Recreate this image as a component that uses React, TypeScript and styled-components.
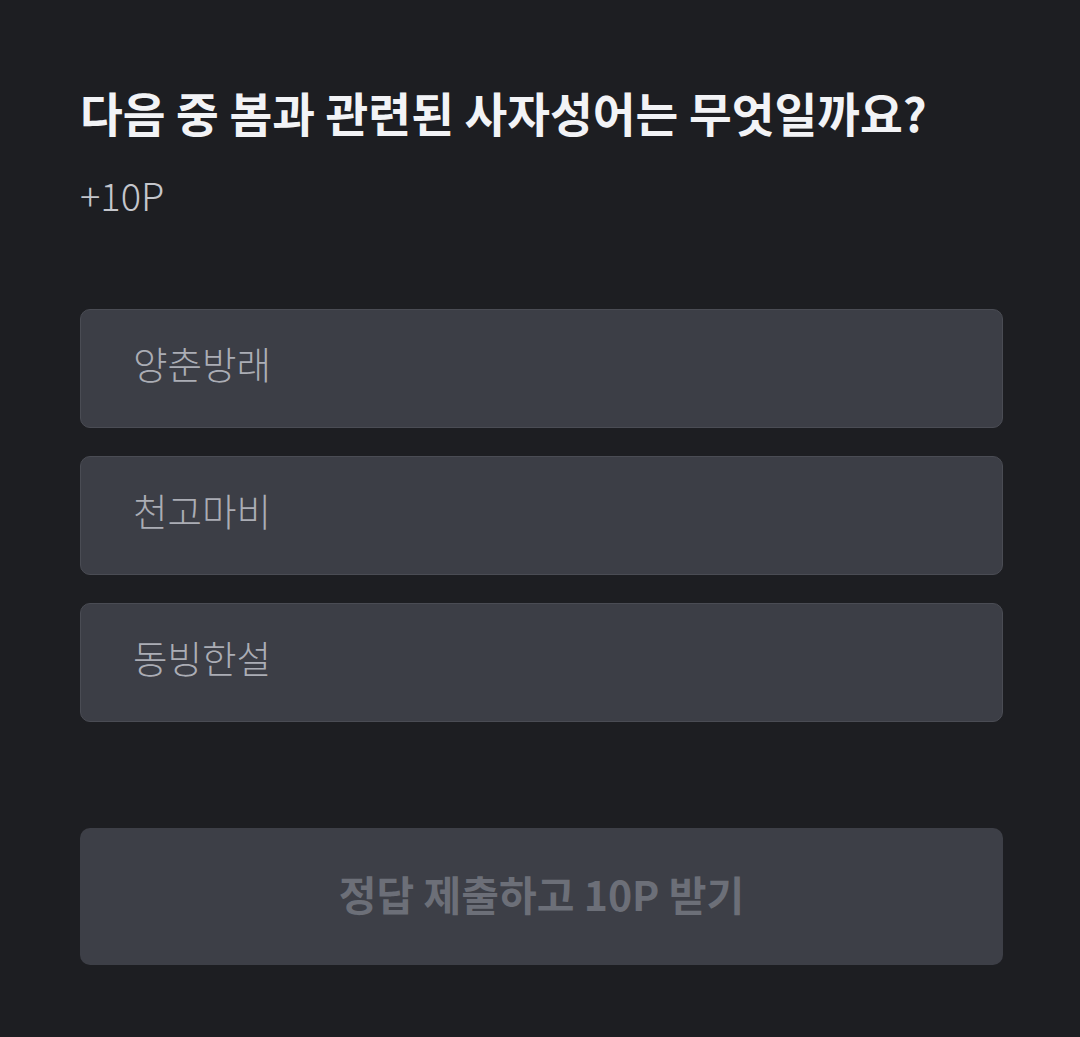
import React from "react";
import styled, { createGlobalStyle } from "styled-components";

const Global = createGlobalStyle`
  html, body { margin: 0; padding: 0; background: #1d1e22; }
  body { font-family: "Noto Sans CJK KR", "Noto Sans", sans-serif; }
  * { box-sizing: border-box; }
`;

const Page = styled.main`
  min-height: 1037px;
  background: #1d1e22;
  padding: 80px 77px 0 80px;
  display: flex;
  flex-direction: column;
`;

const Title = styled.h1`
  margin: 0;
  font-size: 46.5px;
  font-weight: 700;
  line-height: 64px;
  color: #f2f3f6;
  letter-spacing: 0;
`;

const Reward = styled.p`
  margin: 26px 0 0 0;
  font-size: 38px;
  font-weight: 300;
  line-height: 50px;
  color: #c4c6cc;
`;

const Options = styled.div`
  margin-top: 89px;
  display: flex;
  flex-direction: column;
  gap: 28px;
`;

const Option = styled.button`
  height: 119px;
  width: 100%;
  background: #3c3e46;
  border: 1px solid #4a4c54;
  border-radius: 10px;
  padding: 0 0 12px 52px;
  text-align: left;
  font-family: inherit;
  font-size: 37.5px;
  font-weight: 300;
  color: #abadb5;
  cursor: pointer;
`;

const Submit = styled.button<{ $enabled?: boolean }>`
  margin-top: 106px;
  height: 137px;
  width: 100%;
  background: #3d3f47;
  border: none;
  border-radius: 10px;
  padding: 0 0 8px 0;
  font-family: inherit;
  font-size: 41px;
  font-weight: 700;
  color: ${(p) => (p.$enabled ? "#ffffff" : "#6c6f78")};
  letter-spacing: 0;
`;

const choices = ["양춘방래", "천고마비", "동빙한설"];

export default function App() {
  return (
    <>
      <Global />
      <Page>
        <Title>다음 중 봄과 관련된 사자성어는 무엇일까요?</Title>
        <Reward>+10P</Reward>
        <Options>
          {choices.map((c) => (
            <Option key={c}>{c}</Option>
          ))}
        </Options>
        <Submit disabled>정답 제출하고 10P 받기</Submit>
      </Page>
    </>
  );
}
